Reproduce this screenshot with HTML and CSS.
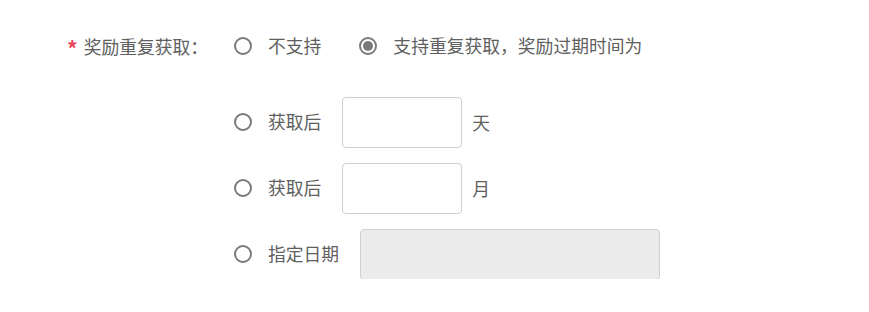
FILE: index.html
```html
<!DOCTYPE html>
<html lang="zh-CN">
<head>
<meta charset="utf-8">
<link rel="stylesheet" href="styles.css">
</head>
<body>
<div class="form">
  <div class="row first">
    <div class="label"><span class="req">*</span>奖励重复获取：</div>
    <label class="opt"><span class="radio"></span><span class="txt">不支持</span></label>
    <label class="opt opt2"><span class="radio checked"></span><span class="txt">支持重复获取，奖励过期时间为</span></label>
  </div>
  <div class="sub">
    <div class="row">
      <label class="opt"><span class="radio"></span><span class="txt">获取后</span></label>
      <span class="input"></span><span class="unit">天</span>
    </div>
    <div class="row">
      <label class="opt"><span class="radio"></span><span class="txt">获取后</span></label>
      <span class="input"></span><span class="unit">月</span>
    </div>
    <div class="row">
      <label class="opt"><span class="radio"></span><span class="txt">指定日期</span></label>
      <span class="input wide disabled"></span>
    </div>
  </div>
</div>
</body>
</html>
```
FILE: styles.css
```css
html, body {
  margin: 0;
  padding: 0;
  background: #fff;
}
body {
  font-family: "Noto Sans CJK SC", "Microsoft YaHei", sans-serif;
  font-size: 17.8px;
  color: #606060;
}
.form {
  padding: 21px 0 0 0;
}
.row {
  display: flex;
  align-items: center;
  height: 50px;
}
.row.first {
  margin-bottom: 26px;
}
.label {
  width: 234px;
  box-sizing: border-box;
  padding-left: 67px;
  display: flex;
  align-items: center;
}
.req {
  color: #e8455b;
  margin-right: 6px;
  font-size: 21px;
  font-weight: bold;
  line-height: 1;
  position: relative;
  top: 2px;
}
.sub {
  padding-left: 234px;
  display: flex;
  flex-direction: column;
  gap: 16px;
}
.opt {
  display: flex;
  align-items: center;
}
.opt2 {
  margin-left: 38px;
}
.radio {
  width: 18px;
  height: 18px;
  box-sizing: border-box;
  border: 2px solid #7a7a7a;
  border-radius: 50%;
  margin-right: 16px;
  display: flex;
  align-items: center;
  justify-content: center;
}
.radio.checked::after {
  content: "";
  width: 10px;
  height: 10px;
  border-radius: 50%;
  background: #7a7a7a;
}
.txt {
  line-height: 1;
}
.input {
  width: 120px;
  height: 51px;
  box-sizing: border-box;
  border: 1px solid #cfcfcf;
  border-radius: 4px;
  margin-left: 21px;
  background: #fff;
}
.input.wide {
  width: 300px;
}
.input.disabled {
  background: #ececec;
}
.unit {
  margin-left: 10px;
}
```
